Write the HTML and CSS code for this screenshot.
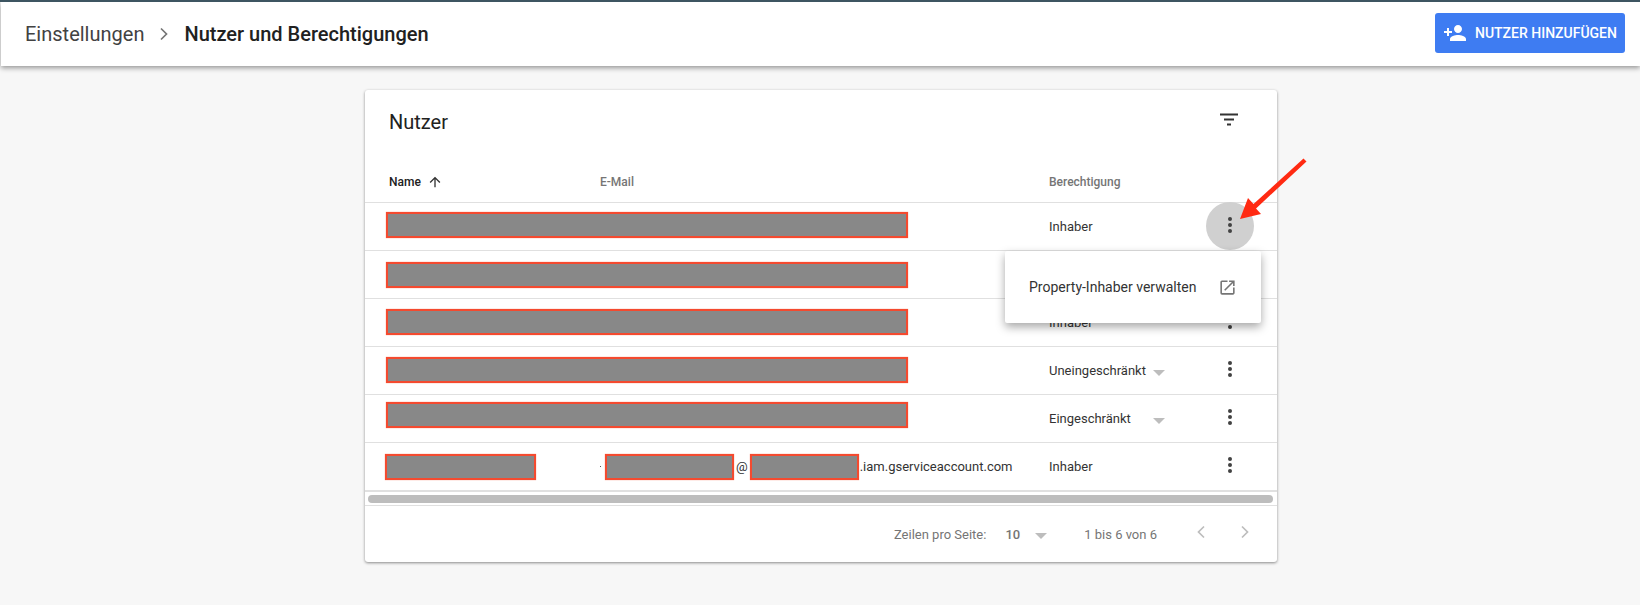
FILE: index.html
```html
<!DOCTYPE html>
<html lang="de">
<head>
<meta charset="utf-8">
<title>Nutzer und Berechtigungen</title>
<link rel="stylesheet" href="styles.css">
</head>
<body>
<header class="topbar">
  <nav class="crumbs">
    <span class="crumb">Einstellungen</span>
    <svg class="crumb-sep" viewBox="0 0 24 24" width="24" height="24"><path d="M9 6.500 14.500 12 9 17.500" fill="none" stroke="#757575" stroke-width="1.700"/></svg>
    <span class="crumb crumb-current">Nutzer und Berechtigungen</span>
  </nav>
  <button class="add-btn">
    <svg viewBox="0 0 24 24" width="24" height="24"><path fill="#fff" d="M15 12c2.210 0 4-1.790 4-4s-1.790-4-4-4-4 1.790-4 4 1.790 4 4 4zm-9-2V7H4v3H1v2h3v3h2v-3h3v-2H6zm9 4c-2.670 0-8 1.340-8 4v2h16v-2c0-2.660-5.330-4-8-4z"/></svg>
    <span>NUTZER HINZUFÜGEN</span>
  </button>
</header>
<main class="page">
  <section class="card">
    <div class="card-head">
      <h2>Nutzer</h2>
      <svg class="filter" viewBox="0 0 24 24" width="24" height="24"><path fill="#333" d="M3 5.500h18v2H3zM7 10.500h10v2H7zM10 15.500h4v2h-4z"/></svg>
    </div>
    <div class="row row-head">
      <div class="col-name th-active">Name
        <svg viewBox="0 0 24 24" width="16" height="16"><path fill="#333" d="M4 12l1.410 1.410L11 7.830V20h2V7.830l5.580 5.590L20 12l-8-8-8 8z"/></svg>
      </div>
      <div class="col-mail th">E-Mail</div>
      <div class="col-perm th">Berechtigung</div>
    </div>
    <div class="row">
      <div class="span-two"><div class="redact redact-wide nudge-3"></div></div>
      <div class="col-perm">Inhaber</div>
      <div class="col-act"><span class="kebab kebab-on"><i></i><i></i><i></i></span></div>
    </div>
    <div class="row">
      <div class="span-two"><div class="redact redact-wide"></div></div>
      <div class="col-perm">Inhaber</div>
      <div class="col-act"><span class="kebab"><i></i><i></i><i></i></span></div>
    </div>
    <div class="row">
      <div class="span-two"><div class="redact redact-wide nudge-1"></div></div>
      <div class="col-perm">Inhaber</div>
      <div class="col-act"><span class="kebab"><i></i><i></i><i></i></span></div>
    </div>
    <div class="row">
      <div class="span-two"><div class="redact redact-wide nudge-1"></div></div>
      <div class="col-perm perm-select"><span class="perm-label">Uneingeschränkt</span><b class="caret"></b></div>
      <div class="col-act"><span class="kebab"><i></i><i></i><i></i></span></div>
    </div>
    <div class="row">
      <div class="span-two"><div class="redact redact-wide nudge-7"></div></div>
      <div class="col-perm perm-select"><span class="perm-label">Eingeschränkt</span><b class="caret"></b></div>
      <div class="col-act"><span class="kebab"><i></i><i></i><i></i></span></div>
    </div>
    <div class="row">
      <div class="col-name"><div class="redact redact-name"></div></div>
      <div class="col-mail mail"><i class="mail-dot"></i><span class="redact redact-user"></span><span class="at">@</span><span class="redact redact-proj"></span><span class="domain">.iam.gserviceaccount.com</span></div>
      <div class="col-perm">Inhaber</div>
      <div class="col-act"><span class="kebab"><i></i><i></i><i></i></span></div>
    </div>
    <div class="scroll-track"><div class="scroll-thumb"></div></div>
    <footer class="pager">
      <span class="pager-label">Zeilen pro Seite:</span>
      <span class="pager-size">10</span>
      <b class="caret caret-pager"></b>
      <span class="pager-range">1 bis 6 von 6</span>
      <svg class="pager-btn" viewBox="0 0 24 24" width="24" height="24"><path d="M15 6.500 9.500 12l5.500 5.500" fill="none" stroke="#bdbdbd" stroke-width="1.700"/></svg>
      <svg class="pager-btn" viewBox="0 0 24 24" width="24" height="24"><path d="M9 6.500 14.500 12 9 17.500" fill="none" stroke="#bdbdbd" stroke-width="1.700"/></svg>
    </footer>
    <div class="menu">
      <span>Property-Inhaber verwalten</span>
      <svg viewBox="0 0 24 24" width="19" height="19"><path fill="#757575" d="M19 19H5V5h7V3H5a2 2 0 0 0-2 2v14a2 2 0 0 0 2 2h14c1.100 0 2-.9 2-2v-7h-2v7zM14 3v2h3.590l-9.830 9.830 1.410 1.410L19 6.410V10h2V3h-7z"/></svg>
    </div>
  </section>
  <svg class="arrow" viewBox="0 0 80 80" width="80" height="80"><path fill="#ff2a12" d="M68.500 .5 71.500 3.500 21 50.500 26 56 5 61 13 40 18.500 46z"/></svg>
</main>
</body>
</html>
```

FILE: styles.css
```css
* { box-sizing: border-box; }
html, body { margin: 0; height: 605px; overflow: hidden; }
body {
  background: #f7f7f7;
  font-family: Roboto, "Liberation Sans", sans-serif;
  color: #212121;
  border-top: 2px solid #3d5561;
}
.topbar {
  height: 64px;
  background: #fff;
  box-shadow: 0 2px 5px rgba(0,0,0,.4);
  margin-left: 1px;
  display: flex;
  align-items: center;
  justify-content: space-between;
  padding: 0 15px 0 24px;
  position: relative;
  z-index: 2;
}
.crumbs { display: flex; align-items: center; }
.crumb { font-size: 20px; font-weight: 400; color: #424242; }
.crumb-sep { margin: 0 8px; }
.crumb-current { font-weight: 500; color: #212121; }
.add-btn {
  width: 190px;
  height: 40px;
  margin-top: -2px;
  background: #3e7cf2;
  border: 0;
  border-radius: 3px;
  color: #fff;
  font: 500 14px Roboto, sans-serif;
  display: flex;
  align-items: center;
  gap: 8px;
  padding: 0 8px;
  white-space: nowrap;
}
.page { position: relative; padding-top: 24px; }
.card {
  position: relative;
  width: 912px;
  height: 472px;
  margin-left: 365px;
  background: #fff;
  border-radius: 3px;
  box-shadow: 0 1px 3px rgba(0,0,0,.45);
}
.card-head {
  height: 64px;
  display: flex;
  align-items: center;
  justify-content: space-between;
  padding: 0 36px 0 24px;
}
.card-head h2 { margin: 0; font-size: 20px; font-weight: 400; }
.filter { margin-bottom: 5px; }
.row {
  display: grid;
  grid-template-columns: 211px 449px 1fr 74px;
  align-items: center;
  height: 48px;
  padding-left: 24px;
  font-size: 13px;
  color: #333;
  border-bottom: 1px solid #e0e0e0;
}
.row-head { height: 49px; padding-top: 8px; font-size: 12px; font-weight: 500; }
.th { color: #757575; }
.th-active { display: flex; align-items: center; gap: 6px; color: #212121; }
.span-two { grid-column: 1 / 3; }
.perm-select { display: flex; align-items: center; }
.perm-label { width: 104px; }
.caret {
  width: 0; height: 0;
  border-left: 6px solid transparent;
  border-right: 6px solid transparent;
  border-top: 6px solid #bdbdbd;
  margin-top: 4px;
}
.col-act { display: flex; justify-content: center; padding-right: 20px; }
.kebab {
  width: 48px; height: 48px; border-radius: 50%;
  display: flex; flex-direction: column; align-items: center; justify-content: center; gap: 2px;
  margin-top: -1px;
  padding-bottom: 2px;
}
.kebab i { width: 4px; height: 4px; border-radius: 50%; background: #424242; }
.kebab-on { background: #d0d0d0; }
.redact {
  display: block;
  height: 26px;
  background: #888;
  border: 2px solid #f44a2f;
  box-shadow: 0 0 1px #f7886f;
}
.redact-wide { width: 522px; margin-left: -3px; }
.nudge-1 { margin-bottom: 1px; }
.nudge-3 { margin-bottom: 3px; }
.nudge-7 { margin-bottom: 7px; }
.redact-name { width: 151px; margin-left: -4px; }
.mail { display: flex; align-items: center; }
.mail-dot { width: 1px; height: 1px; background: #555; margin: 0 4px 1px 0; }
.redact-user { width: 129px; }
.redact-proj { width: 109px; }
.at { margin: 0 2px; }
.domain { margin-left: 1px; }
.scroll-track { height: 15px; padding: 3px 4px 2px 3px; border-top: 1px solid #e0e0e0; border-bottom: 1px solid #e0e0e0; }
.scroll-thumb { height: 8px; border-radius: 4px; background: #bdbdbd; }
.pager {
  height: 56px;
  display: flex;
  align-items: center;
  font-size: 13px;
  color: #757575;
  padding-right: 20px;
  justify-content: flex-end;
}
.pager-size { font-weight: 500; margin-left: 19px; }
.caret-pager { margin-left: 15px; }
.pager-range { margin: 0 32px 0 37px; }
.pager-btn { margin-bottom: 4px; }
.pager-btn + .pager-btn { margin-left: 20px; }
.menu {
  position: absolute;
  left: 640px;
  top: 161px;
  width: 256px;
  height: 72px;
  background: #fff;
  border-radius: 2px;
  box-shadow: 0 4px 10px rgba(0,0,0,.35);
  display: flex;
  align-items: center;
  justify-content: space-between;
  padding: 0 24px;
  font-size: 14px;
  color: #333;
}
.arrow { position: absolute; left: 1235px; top: 92px; }
```
